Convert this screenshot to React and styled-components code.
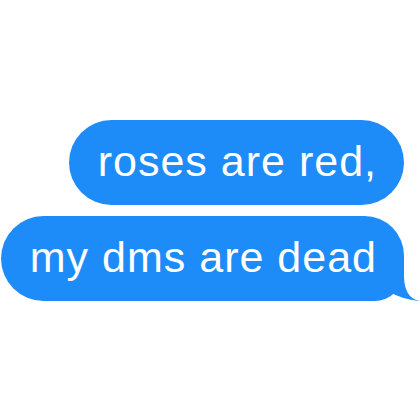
import React from "react";
import styled, { createGlobalStyle } from "styled-components";

const GlobalStyle = createGlobalStyle`
  html, body {
    margin: 0;
    padding: 0;
    background: #ffffff;
  }
`;

const Thread = styled.div`
  width: 420px;
  height: 420px;
  box-sizing: border-box;
  padding-right: 16px;
  display: flex;
  flex-direction: column;
  align-items: flex-end;
  justify-content: center;
  gap: 11px;
  font-family: "Liberation Sans", Arial, sans-serif;
`;

const Bubble = styled.div`
  position: relative;
  height: 85px;
  padding: 0 27px 0 29px;
  line-height: 83px;
  font-size: 43px;
  letter-spacing: 1px;
  color: #ffffff;
  background: #1e8cf8;
  white-space: nowrap;
  border-radius: ${(props) => (props.tail ? "43px 40px 30px 43px" : "43px")};
`;

const Label = styled.span`
  position: relative;
  z-index: 1;
`;

// speech tail hanging off the bottom-right corner
const Tail = styled.svg`
  position: absolute;
  right: -16px;
  bottom: 0;
  width: 50px;
  height: 40px;
`;

const Message = ({ text, tail }) => (
  <Bubble tail={tail ? 1 : 0}>
    {tail && (
      <Tail viewBox="0 0 50 40">
        <path
          d="M0 40 L4 40 C9 39 15 36 20 31 C26 35 38 39 50 40 C41 38 34 32 34 14 L34 0 L0 0 Z"
          fill="#1e8cf8"
        />
      </Tail>
    )}
    <Label>{text}</Label>
  </Bubble>
);

export default function App() {
  return (
    <>
      <GlobalStyle />
      <Thread>
        <Message text="roses are red," />
        <Message text="my dms are dead" tail />
      </Thread>
    </>
  );
}
